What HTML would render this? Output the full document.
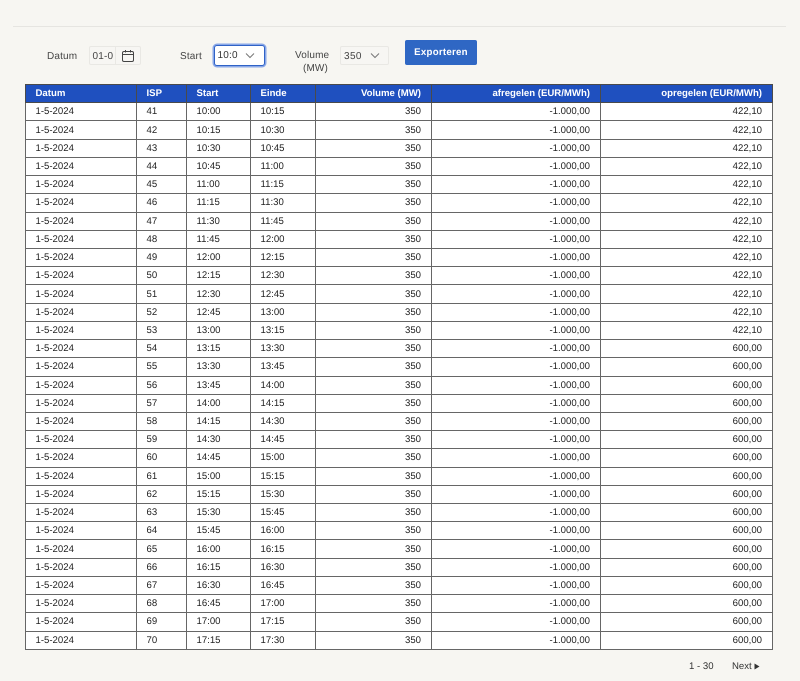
<!DOCTYPE html>
<html><head><meta charset="utf-8">
<style>
html,body{margin:0;padding:0}
body{width:800px;height:681px;background:#f7f6f2;position:relative;overflow:hidden;font-family:"Liberation Sans",sans-serif;color:#333;text-rendering:geometricPrecision}
.a{position:absolute}
.lbl{font-size:10px;color:#444;letter-spacing:.15px;line-height:14px}
.box{position:absolute;box-sizing:border-box;background:#f7f6f3;border:1px solid #e9e8e4;border-radius:2px;font-size:10px;color:#444;letter-spacing:.2px}
table{position:absolute;left:25px;top:84px;width:748px;border-collapse:collapse;table-layout:fixed;font-size:9.6px;color:#222;background:#fff}
th,td{border:1px solid #666;padding:1px 10px 0 9.5px;height:16.23px;line-height:16px;text-align:left;white-space:nowrap;overflow:hidden}
th{background:#1f50bf;color:#fff;font-weight:bold;border-color:#4a4a4a}
.r{text-align:right}
</style></head><body>
<div class="a" style="left:13px;top:26px;width:773px;height:1px;background:#e6e5e1"></div>
<div class="a lbl" style="left:47px;top:50px">Datum</div>
<div class="box" style="left:89px;top:46px;width:52px;height:19px;line-height:19px;padding-left:2.5px">01-0</div>
<div class="a" style="left:115px;top:47px;width:1px;height:17px;background:#e9e8e4"></div>
<svg class="a" style="left:121px;top:49px" width="14" height="14" viewBox="0 0 14 14" fill="none" stroke="#444" stroke-width="1"><rect x="1.5" y="2.5" width="11" height="10" rx="1.5"/><path d="M1.5 5.5h11M4.5 1v2.5M9.5 1v2.5"/></svg>
<div class="a lbl" style="left:180px;top:50px">Start</div>
<div class="box" style="left:214px;top:45px;width:51px;height:21px;line-height:20px;padding-left:2.5px;background:#fff;border:1px solid #2f62c6;box-shadow:0 0 0 1.5px #8aa8e8;border-radius:3px;color:#333">10:0</div>
<svg class="a" style="left:245px;top:52px" width="10" height="7" viewBox="0 0 10 7" fill="none" stroke="#777" stroke-width="1"><path d="M1 1.5l4 4 4-4"/></svg>
<div class="a lbl" style="left:295px;top:50px;width:33px;text-align:right;line-height:12.5px">Volume<br>(MW)</div>
<div class="box" style="left:340px;top:46px;width:49px;height:19px;line-height:19px;padding-left:3px;letter-spacing:.4px">350</div>
<svg class="a" style="left:370px;top:52px" width="10" height="7" viewBox="0 0 10 7" fill="none" stroke="#777" stroke-width="1"><path d="M1 1.5l4 4 4-4"/></svg>
<div class="a" style="left:405px;top:40px;width:72px;height:25px;background:#2f67c4;border-radius:2px;color:#fff;font-size:9.7px;font-weight:bold;text-align:center;line-height:25px;letter-spacing:.25px">Exporteren</div>
<table>
<colgroup><col style="width:111px"><col style="width:50px"><col style="width:64px"><col style="width:65px"><col style="width:116px"><col style="width:169px"><col></colgroup>
<tr><th>Datum</th><th>ISP</th><th>Start</th><th>Einde</th><th class="r">Volume (MW)</th><th class="r">afregelen (EUR/MWh)</th><th class="r">opregelen (EUR/MWh)</th></tr>
<tr><td>1-5-2024</td><td>41</td><td>10:00</td><td>10:15</td><td class="r">350</td><td class="r">-1.000,00</td><td class="r">422,10</td></tr>
<tr><td>1-5-2024</td><td>42</td><td>10:15</td><td>10:30</td><td class="r">350</td><td class="r">-1.000,00</td><td class="r">422,10</td></tr>
<tr><td>1-5-2024</td><td>43</td><td>10:30</td><td>10:45</td><td class="r">350</td><td class="r">-1.000,00</td><td class="r">422,10</td></tr>
<tr><td>1-5-2024</td><td>44</td><td>10:45</td><td>11:00</td><td class="r">350</td><td class="r">-1.000,00</td><td class="r">422,10</td></tr>
<tr><td>1-5-2024</td><td>45</td><td>11:00</td><td>11:15</td><td class="r">350</td><td class="r">-1.000,00</td><td class="r">422,10</td></tr>
<tr><td>1-5-2024</td><td>46</td><td>11:15</td><td>11:30</td><td class="r">350</td><td class="r">-1.000,00</td><td class="r">422,10</td></tr>
<tr><td>1-5-2024</td><td>47</td><td>11:30</td><td>11:45</td><td class="r">350</td><td class="r">-1.000,00</td><td class="r">422,10</td></tr>
<tr><td>1-5-2024</td><td>48</td><td>11:45</td><td>12:00</td><td class="r">350</td><td class="r">-1.000,00</td><td class="r">422,10</td></tr>
<tr><td>1-5-2024</td><td>49</td><td>12:00</td><td>12:15</td><td class="r">350</td><td class="r">-1.000,00</td><td class="r">422,10</td></tr>
<tr><td>1-5-2024</td><td>50</td><td>12:15</td><td>12:30</td><td class="r">350</td><td class="r">-1.000,00</td><td class="r">422,10</td></tr>
<tr><td>1-5-2024</td><td>51</td><td>12:30</td><td>12:45</td><td class="r">350</td><td class="r">-1.000,00</td><td class="r">422,10</td></tr>
<tr><td>1-5-2024</td><td>52</td><td>12:45</td><td>13:00</td><td class="r">350</td><td class="r">-1.000,00</td><td class="r">422,10</td></tr>
<tr><td>1-5-2024</td><td>53</td><td>13:00</td><td>13:15</td><td class="r">350</td><td class="r">-1.000,00</td><td class="r">422,10</td></tr>
<tr><td>1-5-2024</td><td>54</td><td>13:15</td><td>13:30</td><td class="r">350</td><td class="r">-1.000,00</td><td class="r">600,00</td></tr>
<tr><td>1-5-2024</td><td>55</td><td>13:30</td><td>13:45</td><td class="r">350</td><td class="r">-1.000,00</td><td class="r">600,00</td></tr>
<tr><td>1-5-2024</td><td>56</td><td>13:45</td><td>14:00</td><td class="r">350</td><td class="r">-1.000,00</td><td class="r">600,00</td></tr>
<tr><td>1-5-2024</td><td>57</td><td>14:00</td><td>14:15</td><td class="r">350</td><td class="r">-1.000,00</td><td class="r">600,00</td></tr>
<tr><td>1-5-2024</td><td>58</td><td>14:15</td><td>14:30</td><td class="r">350</td><td class="r">-1.000,00</td><td class="r">600,00</td></tr>
<tr><td>1-5-2024</td><td>59</td><td>14:30</td><td>14:45</td><td class="r">350</td><td class="r">-1.000,00</td><td class="r">600,00</td></tr>
<tr><td>1-5-2024</td><td>60</td><td>14:45</td><td>15:00</td><td class="r">350</td><td class="r">-1.000,00</td><td class="r">600,00</td></tr>
<tr><td>1-5-2024</td><td>61</td><td>15:00</td><td>15:15</td><td class="r">350</td><td class="r">-1.000,00</td><td class="r">600,00</td></tr>
<tr><td>1-5-2024</td><td>62</td><td>15:15</td><td>15:30</td><td class="r">350</td><td class="r">-1.000,00</td><td class="r">600,00</td></tr>
<tr><td>1-5-2024</td><td>63</td><td>15:30</td><td>15:45</td><td class="r">350</td><td class="r">-1.000,00</td><td class="r">600,00</td></tr>
<tr><td>1-5-2024</td><td>64</td><td>15:45</td><td>16:00</td><td class="r">350</td><td class="r">-1.000,00</td><td class="r">600,00</td></tr>
<tr><td>1-5-2024</td><td>65</td><td>16:00</td><td>16:15</td><td class="r">350</td><td class="r">-1.000,00</td><td class="r">600,00</td></tr>
<tr><td>1-5-2024</td><td>66</td><td>16:15</td><td>16:30</td><td class="r">350</td><td class="r">-1.000,00</td><td class="r">600,00</td></tr>
<tr><td>1-5-2024</td><td>67</td><td>16:30</td><td>16:45</td><td class="r">350</td><td class="r">-1.000,00</td><td class="r">600,00</td></tr>
<tr><td>1-5-2024</td><td>68</td><td>16:45</td><td>17:00</td><td class="r">350</td><td class="r">-1.000,00</td><td class="r">600,00</td></tr>
<tr><td>1-5-2024</td><td>69</td><td>17:00</td><td>17:15</td><td class="r">350</td><td class="r">-1.000,00</td><td class="r">600,00</td></tr>
<tr><td>1-5-2024</td><td>70</td><td>17:15</td><td>17:30</td><td class="r">350</td><td class="r">-1.000,00</td><td class="r">600,00</td></tr>
</table>
<div class="a" style="left:689px;top:660px;font-size:9.6px;line-height:14px;color:#333">1 - 30</div>
<div class="a" style="left:732px;top:660px;font-size:9.6px;line-height:14px;color:#333">Next</div>
<svg class="a" style="left:754px;top:663px" width="6" height="7" viewBox="0 0 6 7"><path d="M0.5 0.5L5.5 3.5 0.5 6.5z" fill="#333"/></svg>
</body></html>
